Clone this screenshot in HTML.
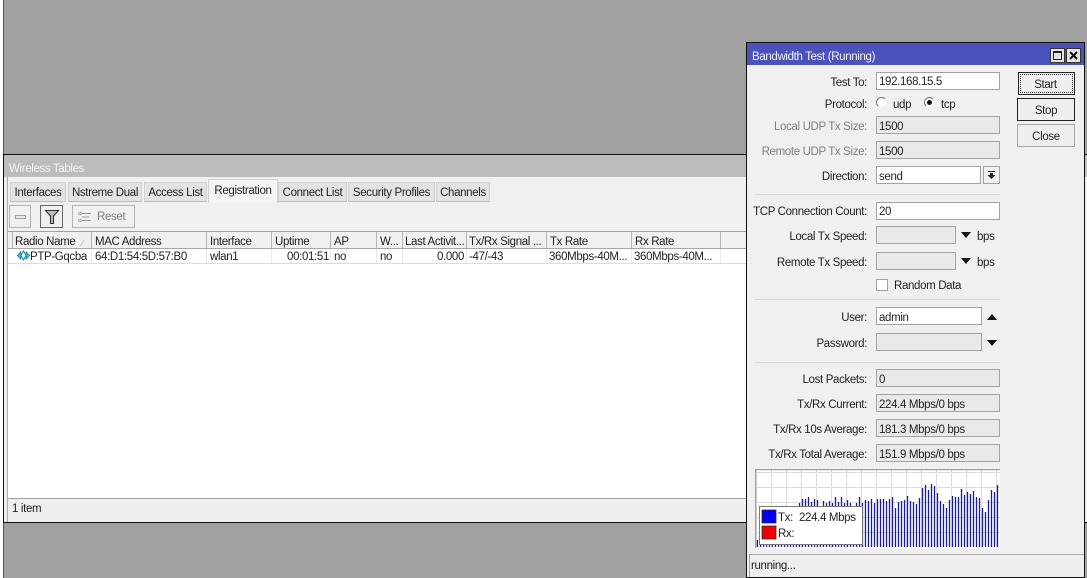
<!DOCTYPE html>
<html><head><meta charset="utf-8">
<style>
html,body{margin:0;padding:0;width:1087px;height:578px;overflow:hidden;background:#fff}
body{position:relative;font-family:"Liberation Sans",sans-serif;font-size:11.5px;letter-spacing:-.35px;color:#222}
div,span,svg{position:absolute;box-sizing:border-box}
.t{white-space:nowrap;line-height:16px}
.tab{top:182px;height:20px;background:#e3e3e3;border:1px solid #d0d0d0;border-bottom:1px solid #bbb;text-align:center;line-height:20px;white-space:nowrap}
.h{top:232px;height:16px;border-right:1px solid #b5b5b5;padding-left:3px;line-height:21px;white-space:nowrap;overflow:hidden;background:#f0f0f0}
.c{top:249px;height:15px;line-height:17px;white-space:nowrap;padding-left:3px;border-right:1px solid #e8e8e8;overflow:hidden}
.l{left:746px;width:121px;text-align:right;white-space:nowrap;line-height:18px}
.f{left:876px;width:124px;height:18px;border:1px solid #a3a3a3;background:#fff;padding-left:2px;line-height:20px;white-space:nowrap}
.d{background:#e9e9e9}
.g{color:#808080}
.sep{left:755px;width:245px;height:1px;background:#d8d8d8}
.b{left:1018px;width:57px;height:23px;border:1px solid #a8a8a8;background:#efefef;text-align:center;line-height:23px}
.tb{background:#f0f0f0;border:1px solid #b4b4b4;top:205px;height:23px}
</style></head>
<body>
<div style="left:3px;top:0;width:1084px;height:578px;background:#a0a0a0;border-left:1px solid #555"></div>

<!-- Wireless Tables window -->
<div style="left:3px;top:154px;width:1084px;height:369px;background:#f0f0f0;border:1px solid #111;border-right:0"></div>
<div style="left:4px;top:155px;width:1083px;height:22px;background:#bcbcbc"></div>
<div class="t" style="left:9px;top:161px;color:#f4f4f4">Wireless Tables</div>
<div style="left:4px;top:177px;width:4px;height:345px;background:#ececec;border-right:1px solid #aaa"></div>

<div class="tab" style="left:10px;width:56px">Interfaces</div>
<div class="tab" style="left:68px;width:74px">Nstreme Dual</div>
<div class="tab" style="left:144px;width:63px">Access List</div>
<div class="tab" style="left:278px;width:69px">Connect List</div>
<div class="tab" style="left:348px;width:87px">Security Profiles</div>
<div class="tab" style="left:436px;width:54px">Channels</div>
<div class="tab" style="left:208px;top:179px;width:70px;height:24px;background:#f4f4f4;border-bottom:0;line-height:22px">Registration</div>

<div class="tb" style="left:9px;width:22px"></div>
<div style="left:15px;top:215px;width:11px;height:4px;background:#e8e8e8;border:1px solid #a0a0a0"></div>
<div class="tb" style="left:40px;width:23px;border-color:#666"></div>
<svg style="left:44px;top:209px" width="16" height="16" viewBox="0 0 16 16"><path d="M1.500 1.500H14.500L9.500 7V14.500H6.500V7Z" fill="#b9c0c4" stroke="#333" stroke-width="1.100"/></svg>
<div class="tb" style="left:72px;width:63px"></div>
<svg style="left:78px;top:211px" width="14" height="12" viewBox="0 0 14 12"><path d="M4 2.500H13M4 6H11M4 9.500H13" stroke="#9a9a9a" fill="none"/><circle cx="2" cy="2.500" r="1.400" fill="none" stroke="#9a9a9a" stroke-width=".8"/><circle cx="2" cy="9.500" r="1.400" fill="none" stroke="#9a9a9a" stroke-width=".8"/></svg>
<div class="t" style="left:97px;top:209px;color:#808080">Reset</div>

<!-- table -->
<div style="left:8px;top:231px;width:738px;height:268px;background:#fff;border-top:1px solid #a0a0a0"></div>
<div style="left:8px;top:232px;width:738px;height:17px;background:#f0f0f0;border-bottom:1px solid #a8a8a8"></div>
<div class="h" style="left:8px;width:5px;padding:0"></div>
<div class="h" style="left:13px;width:79px;padding-left:2px">Radio Name</div>
<div class="t" style="left:82px;top:235px;color:#aaa;font-size:9px">∕</div>
<div class="h" style="left:92px;width:115px">MAC Address</div>
<div class="h" style="left:207px;width:65px">Interface</div>
<div class="h" style="left:272px;width:59px">Uptime</div>
<div class="h" style="left:331px;width:46px">AP</div>
<div class="h" style="left:377px;width:26px">W...</div>
<div class="h" style="left:403px;width:64px;padding-left:2px">Last Activit...</div>
<div class="h" style="left:467px;width:80px;padding-left:2px">Tx/Rx Signal ...</div>
<div class="h" style="left:547px;width:85px">Tx Rate</div>
<div class="h" style="left:632px;width:89px">Rx Rate</div>
<svg style="left:17px;top:250px" width="13" height="11" viewBox="0 0 13 11"><path d="M6.500 1L9 5.500L6.500 10L4 5.500Z" fill="#fff" stroke="#2f7f90" stroke-width="1"/><path d="M4 1.500L.3 5.500L4 9.500ZM9 1.500L12.700 5.500L9 9.500Z" fill="#2fc0dc" stroke="#17728c" stroke-width=".6"/></svg>
<div class="c" style="left:30px;width:62px;padding-left:0">PTP-Gqcba</div>
<div class="c" style="left:92px;width:115px">64:D1:54:5D:57:B0</div>
<div class="c" style="left:207px;width:65px">wlan1</div>
<div class="c" style="left:272px;width:59px;text-align:right;padding-right:1px">00:01:51</div>
<div class="c" style="left:331px;width:46px">no</div>
<div class="c" style="left:377px;width:26px">no</div>
<div class="c" style="left:403px;width:64px;text-align:right;padding-right:2px">0.000</div>
<div class="c" style="left:467px;width:80px;padding-left:2px">-47/-43</div>
<div class="c" style="left:547px;width:85px;padding-left:2px">360Mbps-40M...</div>
<div class="c" style="left:632px;width:89px;padding-left:2px">360Mbps-40M...</div>
<div style="left:8px;top:263px;width:738px;height:1px;background:#dcdcdc"></div>

<!-- status -->
<div style="left:8px;top:498px;width:738px;height:24px;background:#eee;border-top:1px solid #a0a0a0"></div>
<div class="t" style="left:12px;top:501px">1 item</div>

<!-- Dialog -->
<div style="left:746px;top:42px;width:339px;height:536px;background:#f0f0f0;border:1px solid #111"></div>
<div style="left:747px;top:43px;width:337px;height:22px;background:#4b52b9"></div>
<div class="t" style="left:752px;top:49px;color:#f2f2f2">Bandwidth Test (Running)</div>
<div style="left:1050px;top:48px;width:15px;height:15px;background:#e4e4e4;border:1px solid #333"></div>
<div style="left:1053px;top:51px;width:9px;height:9px;border:1px solid #222;border-top-width:2px"></div>
<div style="left:1066px;top:48px;width:15px;height:15px;background:#e4e4e4;border:1px solid #333"></div>
<svg style="left:1069px;top:51px" width="9" height="9" viewBox="0 0 9 9"><path d="M1 1L8 8M8 1L1 8" stroke="#111" stroke-width="2"/></svg>

<div class="l" style="top:74px">Test To:</div>
<div class="f" style="top:72px;line-height:18px">192.168.15.5</div>
<div class="l" style="top:96px">Protocol:</div>
<div style="left:876px;top:97px;width:11px;height:11px;border-radius:50%;background:#fff;border:1px solid;border-color:#777 #eee #eee #777"></div>
<div class="t" style="left:893px;top:97px">udp</div>
<div style="left:924px;top:97px;width:11px;height:11px;border-radius:50%;background:#fff;border:1px solid;border-color:#777 #eee #eee #777"></div>
<div style="left:927px;top:100px;width:5px;height:5px;border-radius:50%;background:#111"></div>
<div class="t" style="left:941px;top:97px">tcp</div>
<div class="l g" style="top:118px">Local UDP Tx Size:</div>
<div class="f d" style="top:116px">1500</div>
<div class="l g" style="top:143px">Remote UDP Tx Size:</div>
<div class="f d" style="top:141px">1500</div>
<div class="l" style="top:168px">Direction:</div>
<div class="f" style="top:166px;width:105px">send</div>
<div style="left:983px;top:166px;width:17px;height:18px;background:#f0f0f0;border:1px solid #a3a3a3"></div>
<svg style="left:987px;top:171px" width="9" height="9" viewBox="0 0 9 9"><path d="M1 .5H8" stroke="#222"/><path d="M3 2H6V4H8.500L4.500 8L.5 4H3Z" fill="#222"/></svg>
<div class="sep" style="top:194px"></div>
<div class="l" style="top:203px">TCP Connection Count:</div>
<div class="f" style="top:202px;line-height:18px">20</div>
<div class="l" style="top:228px">Local Tx Speed:</div>
<div class="f d" style="top:226px;width:80px"></div>
<svg style="left:961px;top:232px" width="10" height="6"><path d="M0 0H10L5 6Z" fill="#111"/></svg>
<div class="t" style="left:977px;top:229px">bps</div>
<div class="l" style="top:254px">Remote Tx Speed:</div>
<div class="f d" style="top:252px;width:80px"></div>
<svg style="left:961px;top:258px" width="10" height="6"><path d="M0 0H10L5 6Z" fill="#111"/></svg>
<div class="t" style="left:977px;top:255px">bps</div>
<div style="left:876px;top:279px;width:12px;height:12px;background:#fff;border:1px solid #a0a0a0"></div>
<div class="t" style="left:894px;top:278px">Random Data</div>
<div class="sep" style="top:299px"></div>
<div class="l" style="top:309px">User:</div>
<div class="f" style="top:307px;width:106px">admin</div>
<svg style="left:987px;top:314px" width="10" height="6"><path d="M0 6H10L5 0Z" fill="#111"/></svg>
<div class="l" style="top:335px">Password:</div>
<div class="f d" style="top:333px;width:106px"></div>
<svg style="left:987px;top:340px" width="10" height="6"><path d="M0 0H10L5 6Z" fill="#111"/></svg>
<div class="sep" style="top:362px"></div>
<div class="l" style="top:371px">Lost Packets:</div>
<div class="f d" style="top:369px">0</div>
<div class="l" style="top:396px">Tx/Rx Current:</div>
<div class="f d" style="top:394px">224.4 Mbps/0 bps</div>
<div class="l" style="top:421px">Tx/Rx 10s Average:</div>
<div class="f d" style="top:419px">181.3 Mbps/0 bps</div>
<div class="l" style="top:446px">Tx/Rx Total Average:</div>
<div class="f d" style="top:444px">151.9 Mbps/0 bps</div>

<div class="b" style="top:72px;border-color:#222"></div>
<div style="left:1020px;top:74px;width:53px;height:19px;border:1px dotted #333"></div>
<div class="t" style="left:1017px;width:57px;top:77px;text-align:center">Start</div>
<div class="b" style="left:1017px;top:98px;width:58px;border-color:#222;line-height:24px">Stop</div>
<div class="b" style="left:1017px;top:124px;width:58px;line-height:24px">Close</div>

<!-- graph -->
<svg style="left:755px;top:469px" width="245" height="79" viewBox="755 469 245 79">
<rect x="755" y="469" width="245" height="79" fill="#fff"/>
<path d="M756.500 470V548M771.500 470V548M786.500 470V548M801.500 470V548M816.500 470V548M831.500 470V548M846.500 470V548M861.500 470V548M876.500 470V548M891.500 470V548M906.500 470V548M921.500 470V548M936.500 470V548M951.500 470V548M966.500 470V548M981.500 470V548M996.500 470V548M755 472.500H1000M755 487.500H1000M755 502.500H1000M755 517.500H1000M755 532.500H1000" stroke="#dcdcdc" fill="none"/>
<path d="M755 469.500H1000M755.500 469V548" stroke="#a0a0a0" fill="none" stroke-width="1.500"/>
<path stroke="#1c1c92" stroke-width="1.300" fill="none" d="M757.500 540V547M760.500 544V547M763.500 544V547M766.500 544V547M769.500 544V547M772.500 544V547M775.500 544V547M778.500 544V547M781.500 544V547M784.500 544V547M787.500 544V547M790.500 544V547M793.500 544V547M796.500 544V547M799.500 503V547M802.500 499V547M805.500 499V547M808.500 497V547M811.500 502V547M814.500 499V547M817.500 500V547M820.500 507V547M823.500 501V547M826.500 503V547M829.500 501V547M832.500 503V547M835.500 497V547M838.500 502V547M841.500 497V547M844.500 503V547M847.500 500V547M850.500 503V547M853.500 507V547M856.500 503V547M859.500 497V547M862.500 503V547M865.500 500V547M868.500 501V547M871.500 499V547M874.500 503V547M877.500 499V547M880.500 499V547M883.500 499V547M886.500 501V547M889.500 499V547M892.500 497V547M895.500 508V547M898.500 502V547M901.500 501V547M904.500 500V547M907.500 496V547M910.500 501V547M913.500 502V547M916.500 504V547M919.500 498V547M922.500 488V547M925.500 485V547M928.500 490V547M931.500 484V547M934.500 486V547M937.500 493V547M940.500 501V547M943.500 504V547M946.500 508V547M949.500 500V547M952.500 496V547M955.500 497V547M958.500 497V547M961.500 489V547M964.500 495V547M967.500 492V547M970.500 494V547M973.500 491V547M976.500 497V547M979.500 498V547M982.500 508V547M985.500 512V547M988.500 500V547M991.500 490V547M994.500 492V547M997.500 485V547"/>
<rect x="759.500" y="506.500" width="103" height="38" fill="#fff" stroke="#777"/>
<rect x="762" y="510" width="14" height="13" fill="#0000f0" stroke="#333" stroke-width=".8"/>
<rect x="762" y="526" width="14" height="13" fill="#f00000" stroke="#333" stroke-width=".8"/>
<text x="778" y="521" font-family="Liberation Sans" font-size="11.500" fill="#222">Tx:</text>
<text x="799" y="521" font-family="Liberation Sans" font-size="11.500" fill="#222">224.4 Mbps</text>
<text x="778" y="537" font-family="Liberation Sans" font-size="11.500" fill="#222">Rx:</text>
</svg>

<!-- dialog status -->
<div style="left:749px;top:554px;width:335px;height:23px;background:#eee;border:1px solid #aaa;border-right:0;border-bottom:0"></div>
<div class="t" style="left:751px;top:558px">running...</div>
</body></html>
